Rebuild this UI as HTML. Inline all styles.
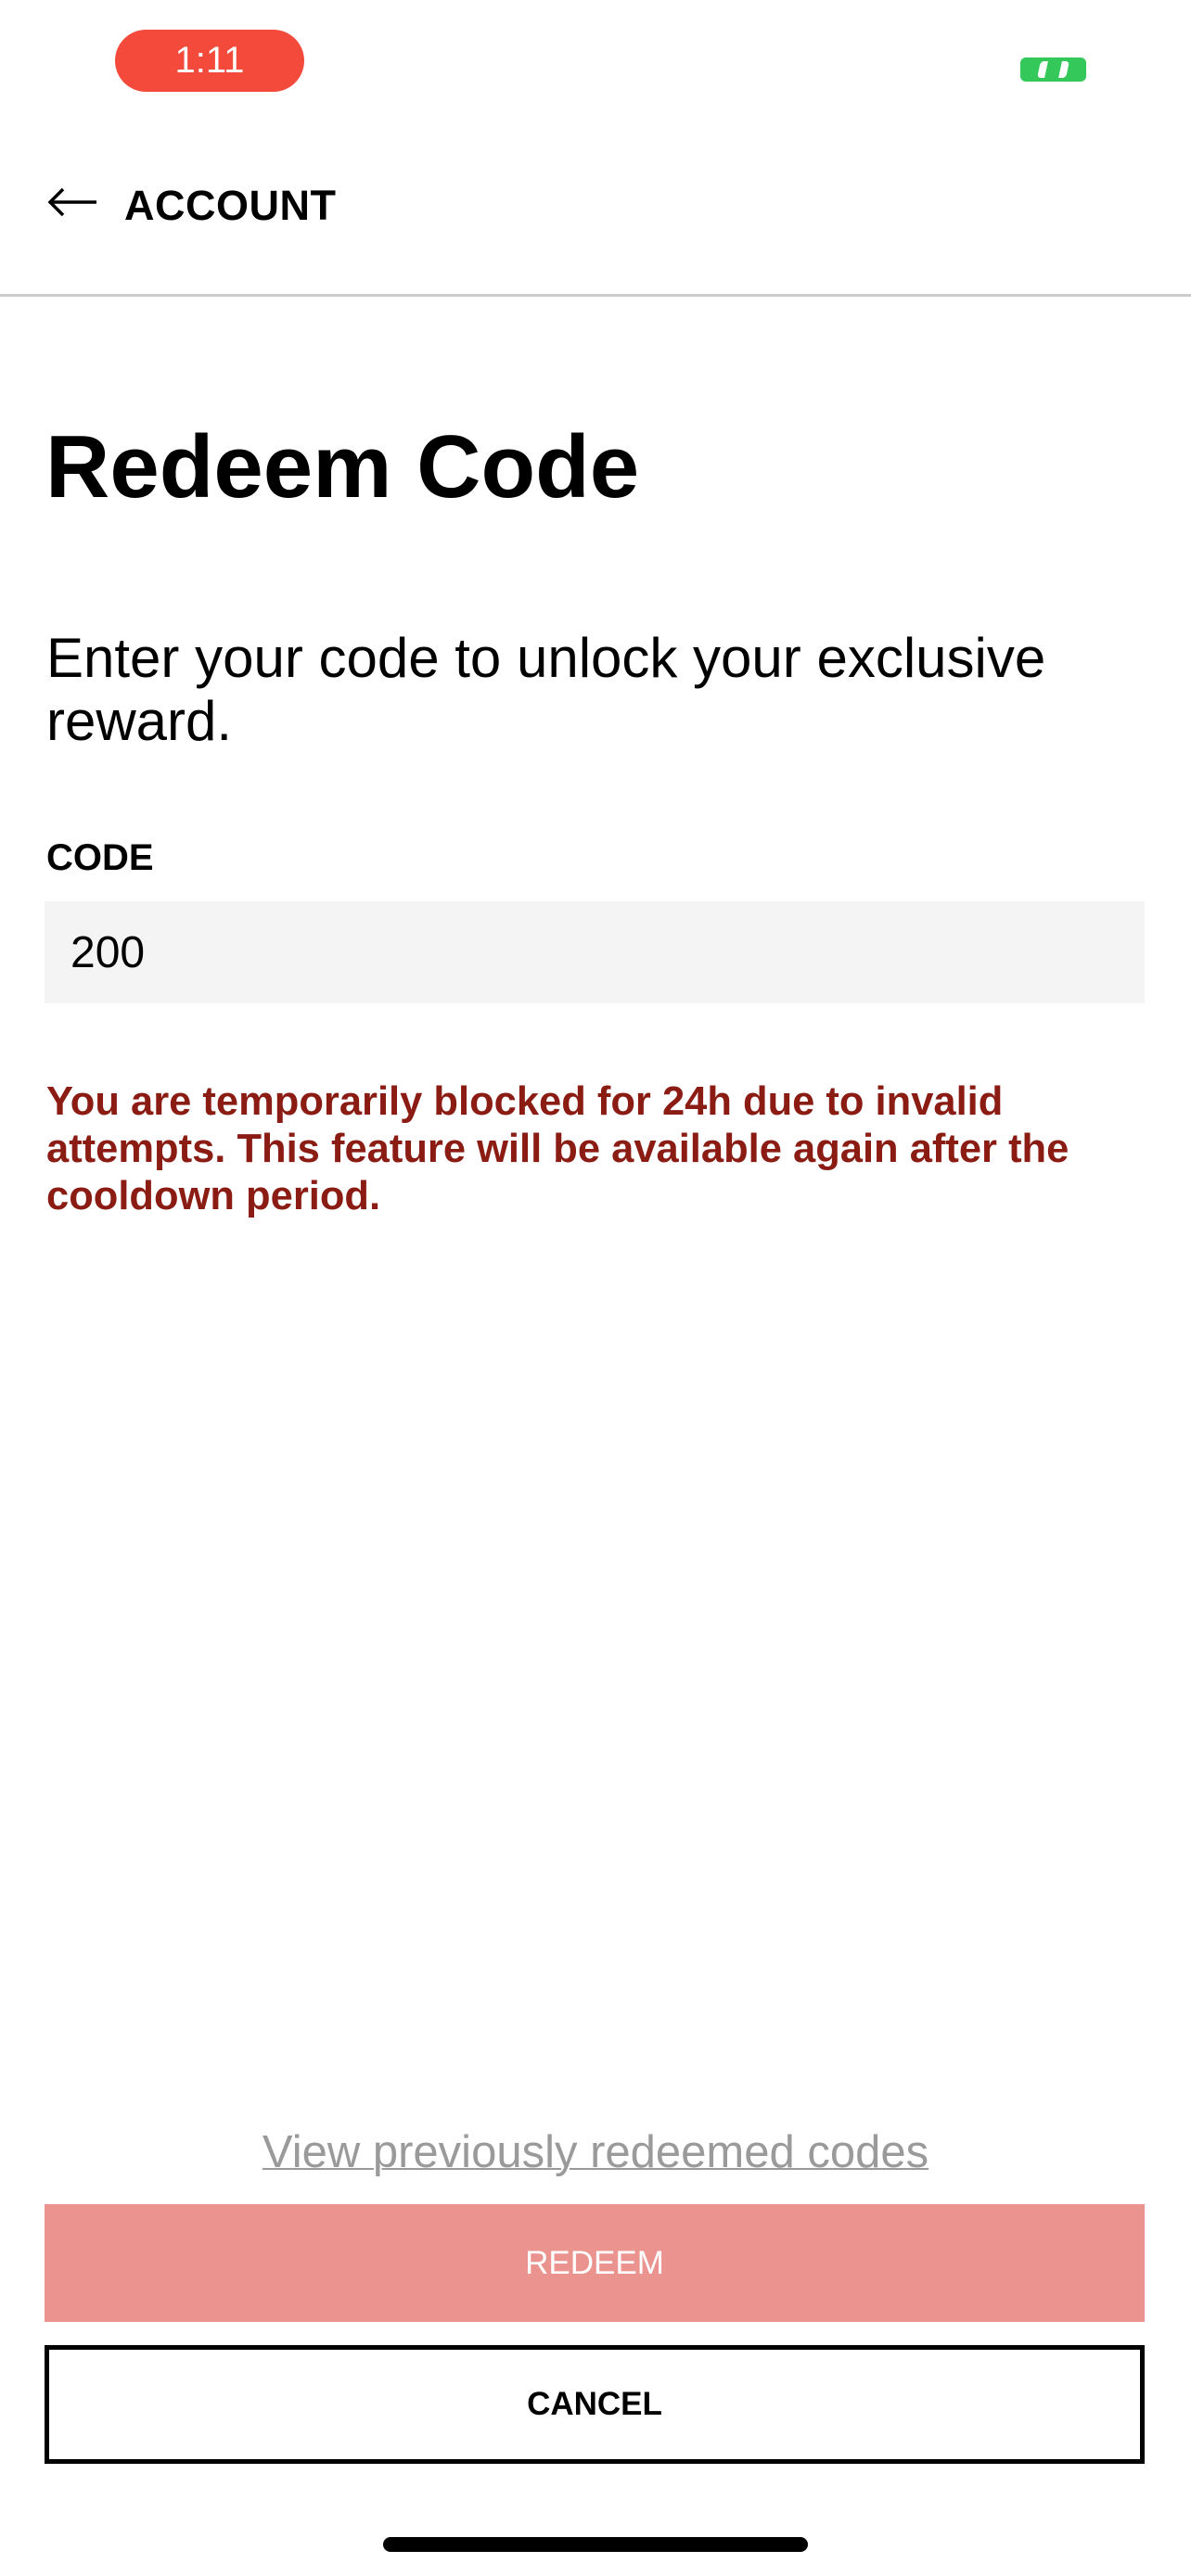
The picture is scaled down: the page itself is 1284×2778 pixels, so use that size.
<!DOCTYPE html>
<html><head><meta charset="utf-8"><style>
*{margin:0;padding:0;box-sizing:border-box}
body{width:1284px;height:2778px;background:#fff;position:relative;overflow:hidden;font-family:"Liberation Sans",sans-serif;color:#000}
.a{position:absolute;white-space:nowrap}
</style></head><body>
<div class="a" style="left:124px;top:32px;width:204px;height:67px;border-radius:34px;background:#f44a3c;color:#fff;font-size:40px;line-height:67px;text-align:center">1:11</div>
<div class="a" style="left:1100px;top:62px;width:71px;height:26px;border-radius:6px;background:#34c759"></div>
<div class="a" style="left:1120px;top:66px;width:8px;height:18px;background:#fff;border-radius:4px 0 0 4px;transform:skewX(-12deg)"></div>
<div class="a" style="left:1143px;top:66px;width:8px;height:18px;background:#fff;border-radius:0 4px 4px 0;transform:skewX(-12deg)"></div>
<svg class="a" style="left:50px;top:200px" width="56" height="36" viewBox="0 0 56 36"><path d="M54 18H4M18 4L4 18L18 32" fill="none" stroke="#000" stroke-width="3.5"/></svg>
<div class="a" style="left:134px;top:198px;font-size:45px;line-height:47px;font-weight:bold;letter-spacing:0.5px">ACCOUNT</div>
<div class="a" style="left:0;top:317px;width:1284px;height:3px;background:#cccccc"></div>
<div class="a" style="left:49px;top:456px;font-size:96px;line-height:96px;font-weight:bold">Redeem Code</div>
<div class="a" style="left:50px;top:676px;font-size:60px;line-height:68px">Enter your code to unlock your exclusive<br>reward.</div>
<div class="a" style="left:50px;top:905px;font-size:40px;line-height:40px;font-weight:bold">CODE</div>
<div class="a" style="left:48px;top:972px;width:1186px;height:110px;background:#f4f4f4"></div>
<div class="a" style="left:76px;top:1005px;font-size:48px;line-height:46px">200</div>
<div class="a" style="left:50px;top:1163px;font-size:43.5px;line-height:51px;font-weight:bold;color:#8b1c14">You are temporarily blocked for 24h due to invalid<br>attempts. This feature will be available again after the<br>cooldown period.</div>
<div class="a" style="left:0;width:1284px;text-align:center;top:2298px;font-size:49px;line-height:46px;color:#9a9a9a;text-decoration:underline;text-decoration-thickness:2px">View previously redeemed codes</div>
<div class="a" style="left:48px;top:2377px;width:1186px;height:127px;background:#eb938e;color:#fff;font-size:35px;line-height:127px;text-align:center">REDEEM</div>
<div class="a" style="left:48px;top:2529px;width:1186px;height:128px;border:5px solid #000;font-size:35px;line-height:118px;text-align:center;font-weight:bold">CANCEL</div>
<div class="a" style="left:413px;top:2736px;width:458px;height:16px;border-radius:8px;background:#000"></div>
</body></html>
